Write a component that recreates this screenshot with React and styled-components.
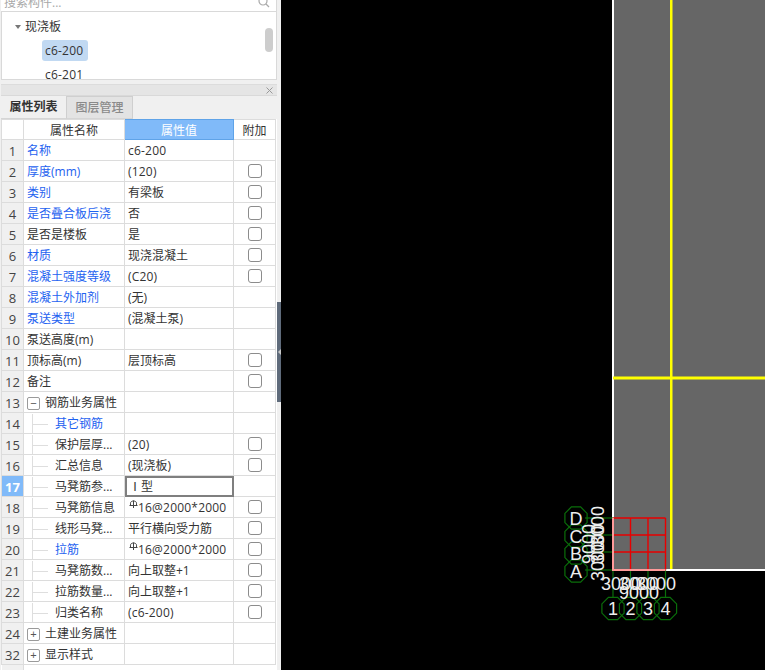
import React from "react";
import styled, { createGlobalStyle } from "styled-components";

const Global = createGlobalStyle`
  html, body { margin: 0; padding: 0; height: 670px; overflow: hidden; background: #000; }
  #root { height: 670px; }
  * { box-sizing: border-box; }
`;

const Page = styled.div`
  display: flex;
  width: 765px;
  height: 670px;
  overflow: hidden;
  font-family: "Open Sans", "Noto Sans CJK SC", sans-serif;
  font-size: 12px;
  color: #333;
`;
const Side = styled.div`
  width: 277px;
  flex: none;
  background: #f0f0f0;
  display: flex;
  flex-direction: column;
  padding-left: 1px;
`;
const Splitter = styled.div`
  width: 4px;
  flex: none;
  background: #f0f0f0;
  padding-top: 302px;
`;
const Handle = styled.div`
  height: 100px;
  background: #5f6b7b;
  display: flex;
  align-items: center;
  justify-content: center;
`;
const HandleArrow = styled.div`
  width: 0;
  height: 0;
  border-top: 3px solid transparent;
  border-bottom: 3px solid transparent;
  border-right: 3px solid #c8c8c8;
`;
const Search = styled.div`
  height: 12px;
  background: #fff;
  border-bottom: 1px solid #d9d9d9;
  border-right: 1px solid #d9d9d9;
  display: flex;
  align-items: flex-end;
  justify-content: space-between;
  padding: 0 6px 0 3px;
  overflow: hidden;
  color: #a8a8a8;
  line-height: 17px;
`;
const SearchText = styled.span`
  flex: none;
  height: 17px;
`;
const SearchIcon = styled.svg`
  flex: none;
  width: 12px;
  height: 12px;
  margin-bottom: 2px;
`;
const Tree = styled.div`
  position: relative;
  height: 68px;
  background: #fff;
  border: 1px solid #d9d9d9;
  border-top: 0;
  overflow: hidden;
  padding: 5px 0 0 13px;
`;
const TreeGroup = styled.div`
  display: flex;
  align-items: center;
  gap: 4px;
  height: 20px;
  line-height: 20px;
`;
const Caret = styled.span`
  width: 0;
  height: 0;
  border-left: 3px solid transparent;
  border-right: 3px solid transparent;
  border-top: 4px solid #777;
`;
const TreeLeaf = styled.div`
  width: ${p => (p.$selected ? "46px" : "auto")};
  height: 21px;
  line-height: 21px;
  margin: 3px 0 0 27px;
  padding-left: 3px;
  border-radius: 3px;
  letter-spacing: 0.2px;
  background: ${p => (p.$selected ? "#c1d9f2" : "transparent")};
`;
const Thumb = styled.div`
  position: absolute;
  right: 3px;
  top: 16px;
  width: 8px;
  height: 24px;
  border-radius: 4px;
  background: #cdcdcd;
`;
const PanelBar = styled.div`
  margin-top: 4px;
  height: 12px;
  background: #e5e5e5;
  border-top: 1px solid #dcdcdc;
  border-bottom: 1px solid #d9d9d9;
  display: flex;
  align-items: center;
  justify-content: flex-end;
  padding-right: 4px;
`;
const CloseIcon = styled.svg`
  width: 7px;
  height: 7px;
`;
const Tabs = styled.div`
  display: flex;
  height: 23px;
  background: #f0f0f0;
`;
const Tab = styled.div`
  width: 66px;
  text-align: center;
  line-height: 22px;
  font-weight: ${p => (p.$active ? 700 : 500)};
  color: ${p => (p.$active ? "#333" : "#8a8a8a")};
  background: ${p => (p.$active ? "#f0f0f0" : "#e3e3e3")};
  border-right: 1px solid #cfcfcf;
  border-top: ${p => (p.$active ? "0" : "1px solid #cfcfcf")};
  border-bottom: 1px solid #d5d5d5;
`;
const TabRest = styled.div`
  flex: 1;
`;
const Table = styled.table`
  width: 274px;
  table-layout: fixed;
  border-collapse: collapse;
  background: #fff;
  font-size: 12px;
`;
const Body = styled.div`
  flex: 1;
  background: #fff;
  overflow: hidden;
`;
const Row = styled.tr`
  height: ${p => (p.$head ? "20px" : "21px")};
`;
const Cell = styled.td`
  border: 1px solid #dcdcdc;
  padding: 2px 0 0 3px;
  height: 21px;
  line-height: 18px;
  white-space: nowrap;
  overflow: hidden;
  letter-spacing: ${p => (p.$latin ? "0.2px" : "0")};
  color: ${p => (p.$blue ? "#1e62f0" : "#333")};
`;
const NumCell = styled.td`
  border: 1px solid #dcdcdc;
  height: 21px;
  padding: 2px 0 0;
  text-align: center;
  background: ${p => (p.$active ? "#80baf9" : "#f0f0f0")};
  color: ${p => (p.$active ? "#fff" : "#444")};
  font-weight: ${p => (p.$active ? 700 : 400)};
  font-size: 13px;
  line-height: 18px;
`;
const HeadCell = styled.td`
  border: 1px solid ${p => (p.$active ? "#5fa3e8" : "#dcdcdc")};
  height: 20px;
  padding: 2px 0 0;
  text-align: center;
  line-height: 17px;
  background: ${p => (p.$active ? "#80baf9" : "#fff")};
  color: ${p => (p.$active ? "#fff" : "#333")};
`;
const EditCell = styled.td`
  border: 1px solid #dcdcdc;
  outline: 2px solid #7f7f7f;
  outline-offset: -2px;
  height: 21px;
  padding: 2px 0 0 4px;
  line-height: 18px;
  color: #333;
`;
const CheckCell = styled.td`
  border: 1px solid #dcdcdc;
  padding: 0;
  text-align: center;
`;
const Check = styled.span`
  display: block;
  width: 14px;
  height: 14px;
  margin: 0 auto;
  border: 1px solid #8c8c8c;
  border-radius: 3px;
  background: #fff;
`;
const Indent = styled.span`
  display: flex;
  align-items: center;
  height: 18px;
`;
const Branch = styled.span`
  position: relative;
  display: block;
  flex: none;
  width: 16px;
  height: 21px;
  margin: 0 7px 0 5px;
  border-left: 1px solid #dedede;
  &::after {
    content: "";
    position: absolute;
    left: 0;
    right: 0;
    top: 10px;
    border-top: 1px solid #dedede;
  }
`;
const Toggle = styled.span`
  flex: none;
  display: flex;
  align-items: center;
  justify-content: center;
  width: 13px;
  height: 13px;
  margin-right: 5px;
  border: 1px solid #9a9a9a;
  border-radius: 2px;
  color: #555;
  font-size: 11px;
  line-height: 10px;
  font-family: "Liberation Sans", sans-serif;
`;
const Rebar = styled.svg`
  width: 9px;
  height: 9px;
  margin-left: 1px;
  vertical-align: 3px;
`;
const Filler = styled.td`
  height: 6px;
  background: ${p => (p.$num ? "#f0f0f0" : "#fff")};
  border-right: ${p => (p.$num ? "1px solid #dcdcdc" : "0")};
`;
const Canvas = styled.div`
  flex: 1;
  background: #000;
  height: 670px;
`;
const CanvasSvg = styled.svg`
  display: block;
  width: 484px;
  height: 670px;
`;

const RebarMark = () => (
  <Rebar viewBox="0 0 9 9">
    <path d="M1.5 5V3.2C1.5 1.8 2.8 1 4.5 1S7.5 1.8 7.5 3.2V5M4.5 .5V8M.5 5.5H8.5" fill="none" stroke="#444" strokeWidth="1" />
  </Rebar>
);

const rows = [
  { n: 1, name: "名称", blue: true, value: "c6-200", latin: true },
  { n: 2, name: "厚度(mm)", blue: true, value: "(120)", check: true, latin: true },
  { n: 3, name: "类别", blue: true, value: "有梁板", check: true },
  { n: 4, name: "是否叠合板后浇", blue: true, value: "否", check: true },
  { n: 5, name: "是否是楼板", value: "是", check: true },
  { n: 6, name: "材质", blue: true, value: "现浇混凝土", check: true },
  { n: 7, name: "混凝土强度等级", blue: true, value: "(C20)", check: true, latin: true },
  { n: 8, name: "混凝土外加剂", blue: true, value: "(无)" },
  { n: 9, name: "泵送类型", blue: true, value: "(混凝土泵)" },
  { n: 10, name: "泵送高度(m)", value: "" },
  { n: 11, name: "顶标高(m)", value: "层顶标高", check: true },
  { n: 12, name: "备注", value: "", check: true },
  { n: 13, name: "钢筋业务属性", value: "", toggle: "−" },
  { n: 14, name: "其它钢筋", blue: true, value: "", child: true },
  { n: 15, name: "保护层厚...", value: "(20)", check: true, child: true, latin: true },
  { n: 16, name: "汇总信息", value: "(现浇板)", check: true, child: true },
  { n: 17, name: "马凳筋参...", value: "Ⅰ型", child: true, edit: true },
  { n: 18, name: "马凳筋信息", value: "16@2000*2000", rebar: true, check: true, child: true, latin: true },
  { n: 19, name: "线形马凳...", value: "平行横向受力筋", check: true, child: true },
  { n: 20, name: "拉筋", blue: true, value: "16@2000*2000", rebar: true, check: true, child: true, latin: true },
  { n: 21, name: "马凳筋数...", value: "向上取整+1", check: true, child: true },
  { n: 22, name: "拉筋数量...", value: "向上取整+1", check: true, child: true },
  { n: 23, name: "归类名称", value: "(c6-200)", check: true, child: true, latin: true },
  { n: 24, name: "土建业务属性", value: "", toggle: "+" },
  { n: 32, name: "显示样式", value: "", toggle: "+" },
];

const ring = (cx, cy, r, sides, offset) => {
  const pts = [];
  for (let i = 0; i < sides; i++) {
    const a = ((Math.PI * 2) / sides) * i + offset;
    pts.push(`${(cx + r * Math.cos(a)).toFixed(1)},${(cy + r * Math.sin(a)).toFixed(1)}`);
  }
  return pts.join(" ");
};

const ox = 281;
const xs = [613, 630.5, 648, 665.5].map(v => v - ox);
const ys = [518, 535, 552, 570];
const rowLabels = [["D", 518], ["C", 536], ["B", 553], ["A", 571]];

const Drawing = () => (
  <CanvasSvg viewBox="0 0 484 670">
    <rect x={332} y={0} width={152} height={569} fill="#666" />
    <path d="M332 0V570H484" fill="none" stroke="#fff" strokeWidth="2" />
    <rect x={389} y={0} width={2.5} height={569} fill="#ff0" />
    <rect x={332} y={376.5} width={152} height={3} fill="#ff0" />
    <g stroke="#0a6e0a" strokeWidth="1.2" fill="none">
      {xs.map(x => <line key={x} x1={x} y1={570} x2={x} y2={598} />)}
      {ys.map(y => <line key={y} x1={304} y1={y} x2={332} y2={y} />)}
      {xs.map(x => <polygon key={x} points={ring(x, 608.5, 12, 8, Math.PI / 8)} />)}
      {rowLabels.map(([l, y]) => <polygon key={l} points={ring(295, y, 12, 8, Math.PI / 8)} />)}
    </g>
    <g stroke="#e80000" strokeWidth="1.4" fill="none">
      {xs.map(x => <line key={x} x1={x} y1={518} x2={x} y2={570} />)}
      {ys.map(y => <line key={y} x1={332} y1={y} x2={384.5} y2={y} />)}
    </g>
    <path d="M332 518V570H384.5" fill="none" stroke="#ff9a9a" strokeWidth="2" />
    <g fill="#eee" fontFamily='"Liberation Sans", sans-serif' fontSize="18" textAnchor="middle">
      {xs.map((x, i) => <text key={x} x={x} y={615}>{i + 1}</text>)}
      {rowLabels.map(([l, y]) => <text key={l} x={295} y={y + 6.5}>{l}</text>)}
      {[340, 358, 375].map(x => <text key={x} x={x} y={590}>3000</text>)}
      <text x={358} y={599}>9000</text>
      {[561, 544, 526].map(y => <text key={y} x={0} y={0} transform={`translate(323 ${y}) rotate(-90)`}>3000</text>)}
      <text x={0} y={0} transform="translate(314 544) rotate(-90)">9000</text>
    </g>
  </CanvasSvg>
);

export default function App() {
  return (
    <Page>
      <Global />
      <Side>
        <Search>
          <SearchText>搜索构件...</SearchText>
          <SearchIcon viewBox="0 0 12 12">
            <circle cx="5" cy="4" r="4" fill="none" stroke="#aaa" strokeWidth="1.2" />
            <path d="M8 7l3 3" stroke="#aaa" strokeWidth="1.2" />
          </SearchIcon>
        </Search>
        <Tree>
          <TreeGroup><Caret />现浇板</TreeGroup>
          <TreeLeaf $selected>c6-200</TreeLeaf>
          <TreeLeaf>c6-201</TreeLeaf>
          <Thumb />
        </Tree>
        <PanelBar>
          <CloseIcon viewBox="0 0 7 7">
            <path d="M.5 .5l6 6M6.5 .5l-6 6" stroke="#999" strokeWidth="1" />
          </CloseIcon>
        </PanelBar>
        <Tabs>
          <Tab $active>属性列表</Tab>
          <Tab>图层管理</Tab>
          <TabRest />
        </Tabs>
        <Body>
          <Table>
            <colgroup>
              <col width="22" />
              <col width="101" />
              <col width="109" />
              <col width="42" />
            </colgroup>
            <tbody>
              <Row $head>
                <HeadCell />
                <HeadCell>属性名称</HeadCell>
                <HeadCell $active>属性值</HeadCell>
                <HeadCell>附加</HeadCell>
              </Row>
              {rows.map(r => (
                <Row key={r.n}>
                  <NumCell $active={r.edit}>{r.n}</NumCell>
                  <Cell $blue={r.blue}>
                    {r.child ? (
                      <Indent><Branch />{r.name}</Indent>
                    ) : r.toggle ? (
                      <Indent><Toggle>{r.toggle}</Toggle>{r.name}</Indent>
                    ) : r.name}
                  </Cell>
                  {r.edit ? (
                    <EditCell>{r.value}</EditCell>
                  ) : (
                    <Cell $latin={r.latin}>{r.rebar && <RebarMark />}{r.value}</Cell>
                  )}
                  <CheckCell>{r.check && <Check />}</CheckCell>
                </Row>
              ))}
              <tr>
                <Filler $num />
                <Filler />
                <Filler />
                <Filler />
              </tr>
            </tbody>
          </Table>
        </Body>
      </Side>
      <Splitter><Handle><HandleArrow /></Handle></Splitter>
      <Canvas><Drawing /></Canvas>
    </Page>
  );
}
